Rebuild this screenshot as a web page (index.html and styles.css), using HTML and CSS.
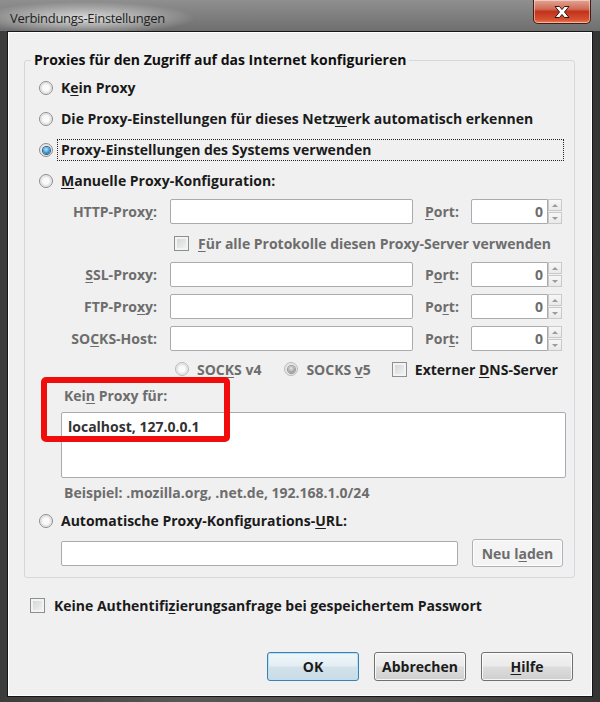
FILE: index.html
```html
<!DOCTYPE html>
<html lang="de">
<head>
    <meta charset="UTF-8">
    <title>Verbindungs-Einstellungen</title>
    <link rel="stylesheet" href="styles.css">
</head>
<body>
    <div class="window">
        <div class="titlebar">
            <span class="title">Verbindungs-Einstellungen</span>
            <span class="close">
                <svg width="20" height="14" viewBox="0 0 20 14">
                    <path d="M3 1.5 L7.5 1.5 L10 4.5 L12.5 1.5 L17 1.5 L12.5 7 L17 12.5 L12.5 12.5 L10 9.5 L7.5 12.5 L3 12.5 L7.5 7 Z" fill="#fff" stroke="#3a1410" stroke-width="1" stroke-linejoin="round"/>
                </svg>
            </span>
        </div>

        <div class="client">
            <fieldset class="group">
                <legend>Proxies für den Zugriff auf das Internet konfigurieren</legend>

                <div class="opt"><span class="radio"></span><span class="lbl">K<u>e</u>in Proxy</span></div>
                <div class="opt"><span class="radio"></span><span class="lbl">Die Proxy-Einstellungen für dieses Netz<u>w</u>erk automatisch erkennen</span></div>
                <div class="opt"><span class="radio on"></span><span class="lbl focus">Proxy-Einstellun<u>g</u>en des Systems verwenden</span></div>
                <div class="opt"><span class="radio"></span><span class="lbl"><u>M</u>anuelle Proxy-Konfiguration:</span></div>

                <div class="manual">
                    <span class="name">HTTP-Prox<u>y</u>:</span>
                    <span class="field"></span>
                    <span class="port-lbl"><u>P</u>ort:</span>
                    <span class="port"><span class="num">0</span><span class="spin"><i class="up"></i><i class="down"></i></span></span>

                    <span class="span-row check-row"><span class="check"></span><span class="dis"><u>F</u>ür alle Protokolle diesen Proxy-Server verwenden</span></span>

                    <span class="name"><u>S</u>SL-Proxy:</span>
                    <span class="field"></span>
                    <span class="port-lbl">P<u>o</u>rt:</span>
                    <span class="port"><span class="num">0</span><span class="spin"><i class="up"></i><i class="down"></i></span></span>

                    <span class="name">FTP-Pro<u>x</u>y:</span>
                    <span class="field"></span>
                    <span class="port-lbl">Po<u>r</u>t:</span>
                    <span class="port"><span class="num">0</span><span class="spin"><i class="up"></i><i class="down"></i></span></span>

                    <span class="name">SO<u>C</u>KS-Host:</span>
                    <span class="field"></span>
                    <span class="port-lbl">Por<u>t</u>:</span>
                    <span class="port"><span class="num">0</span><span class="spin"><i class="up"></i><i class="down"></i></span></span>

                    <span class="span-row socks-row">
                        <span class="radio dim"></span><span class="dis v4">SOC<u>K</u>S v4</span>
                        <span class="radio dim on"></span><span class="dis v5">SOCKS <u>v</u>5</span>
                        <span class="check"></span><span>Externer <u>D</u>NS-Server</span>
                    </span>
                </div>

                <div class="noproxy">
                    <div class="np-label dis">Kei<u>n</u> Proxy für:</div>
                    <div class="textarea">localhost, 127.0.0.1</div>
                    <div class="hint dis">Beispiel: .mozilla.org, .net.de, 192.168.1.0/24</div>
                </div>

                <div class="opt auto"><span class="radio"></span><span class="lbl">Automatische Proxy-Konfigurations-<u>U</u>RL:</span></div>
                <div class="url-row">
                    <span class="field url"></span>
                    <span class="btn dis">Neu l<u>a</u>den</span>
                </div>
            </fieldset>

            <div class="auth"><span class="check"></span><span>Keine Authentifi<u>z</u>ierungsanfrage bei gespeichertem Passwort</span></div>

            <div class="buttons">
                <span class="btn default">OK</span>
                <span class="btn">Abbrechen</span>
                <span class="btn"><u>H</u>ilfe</span>
            </div>
        </div>

        <!-- Markierung aus dem Screenshot -->
        <div class="mark"></div>
    </div>
</body>
</html>
```

FILE: styles.css
```css
* {
    box-sizing: border-box;
}

body {
    margin: 0;
    width: 600px;
    height: 702px;
    overflow: hidden;
    font-family: "Open Sans", "Liberation Sans", sans-serif;
    font-size: 14px;
    font-weight: 700;
    color: #1b1b1b;
}

u {
    text-decoration-thickness: 1px;
    text-underline-offset: 2px;
}

.window {
    position: relative;
    height: 702px;
    padding: 0 7px 5px 7px;
    display: flex;
    flex-direction: column;
    background: linear-gradient(90deg, #3c3c3c, #575757 30%, #4b4b4b 70%, #353535);
}

/* Titelleiste */
.titlebar {
    height: 31px;
    flex: none;
    margin: 0 -7px;
    padding: 0 9px 0 10px;
    display: flex;
    justify-content: space-between;
    align-items: flex-start;
    background:
        radial-gradient(ellipse 110px 16px at 85px 18px, rgba(225, 225, 225, 0.95), rgba(225, 225, 225, 0)),
        linear-gradient(#8f8f8f, #6f6f6f);
}

.title {
    margin-top: 8px;
    font-size: 13px;
    letter-spacing: -0.3px;
    font-weight: 400;
    color: #222;
    line-height: 20px;
}

.close {
    width: 58px;
    height: 24px;
    display: flex;
    align-items: center;
    justify-content: center;
    border: 1px solid #4a1b14;
    border-top: none;
    border-radius: 0 0 5px 5px;
    background: linear-gradient(#e3a594, #cf6a54 40%, #c2321c 50%, #d5512f 85%, #e87e57);
    box-shadow: inset 0 0 0 1px rgba(255, 255, 255, 0.45);
}

/* Inhalt */
.client {
    flex: 1;
    display: flex;
    flex-direction: column;
    background: #f0f0f0;
    border: 1px solid #161616;
    box-shadow: inset 0 0 0 1px #fff;
}

.group {
    margin: 18px 17px 0 16px;
    padding: 7px 10px 10px 14px;
    border: 1px solid #d2d8dd;
    border-radius: 3px;
    min-width: 0;
}

.group legend {
    margin-left: -8px;
    padding: 0 3px;
    line-height: 20px;
    color: #111;
}

.opt {
    height: 22px;
    display: flex;
    align-items: center;
    margin-bottom: 9px;
}

.opt .lbl {
    margin-left: 5px;
    padding: 0 3px;
    line-height: 20px;
}

.opt .focus {
    flex: 1;
    border: 1px dotted #222;
    padding: 0 3px;
    margin-left: 4px;
}

.opt:nth-of-type(4) {
    margin-bottom: 0;
}

.radio {
    flex: none;
    width: 14px;
    height: 14px;
    border: 1px solid #8c8c8c;
    border-radius: 50%;
    background: radial-gradient(circle at 50% 50%, #fafafa 0 3px, #e2e2e2 5px, #f7f7f7 7px);
    display: flex;
    align-items: center;
    justify-content: center;
}

.radio.on::after {
    content: "";
    width: 7px;
    height: 7px;
    border-radius: 50%;
    background: radial-gradient(circle at 45% 35%, #b6ecff, #3d96d1 55%, #174d82);
    box-shadow: 0 0 0 1px #2a5f8e;
}

.radio.dim {
    border-color: #b9b9b9;
}

.radio.dim.on::after {
    background: radial-gradient(circle at 45% 35%, #e6e6e6, #a5a5a5 60%, #808080);
    box-shadow: 0 0 0 1px #9a9a9a;
}

.check {
    flex: none;
    width: 15px;
    height: 15px;
    border: 1px solid #8e8f8f;
    background: linear-gradient(135deg, #cfd1d4, #f6f6f6);
    box-shadow: inset 0 0 0 2px #f3f3f3;
}

.dis {
    color: #6d6d6d;
}

/* Manuelle Konfiguration */
.manual {
    margin: 7px 0 0 22px;
    display: grid;
    grid-template-columns: 97px 243px 34px 91px;
    grid-template-rows: 25px 24px 25px 25px 25px 22px;
    column-gap: 12px;
    row-gap: 7px;
    align-items: center;
}

.manual .name {
    text-align: right;
    padding-right: 1px;
    color: #6d6d6d;
}

.manual .port-lbl {
    color: #6d6d6d;
}

.field {
    height: 25px;
    background: #fff;
    border: 1px solid #a9abb0;
    border-radius: 2px;
}

.port {
    height: 25px;
    display: flex;
}

.port .num {
    flex: 1;
    background: #fff;
    border: 1px solid #a9abb0;
    border-radius: 2px 0 0 2px;
    text-align: right;
    padding-right: 4px;
    line-height: 23px;
    color: #6d6d6d;
}

.spin {
    width: 14px;
    display: flex;
    flex-direction: column;
    gap: 1px;
}

.spin i {
    flex: 1;
    border: 1px solid #c9c9c9;
    background: linear-gradient(#f7f7f7, #e9e9e9);
    display: flex;
    align-items: center;
    justify-content: center;
}

.spin .up::after,
.spin .down::after {
    content: "";
    border-left: 3px solid transparent;
    border-right: 3px solid transparent;
}

.spin .up::after {
    border-bottom: 3px solid #9a9a9a;
}

.spin .down::after {
    border-top: 3px solid #9a9a9a;
}

.span-row {
    grid-column: 2 / 5;
    display: flex;
    align-items: center;
}

.check-row {
    height: 24px;
    padding-left: 4px;
}

.check-row .check {
    margin-right: 9px;
}

.socks-row {
    height: 22px;
    padding-left: 5px;
}

.socks-row .dis,
.socks-row .check + span {
    margin-left: 8px;
}

.socks-row .v4 {
    margin-right: 23px;
}

.socks-row .v5 {
    margin-right: 21px;
}

/* Ausnahmen */
.noproxy {
    margin-left: 22px;
}

.np-label {
    margin: 6px 0 0 3px;
    line-height: 20px;
}

.textarea {
    margin-top: 6px;
    width: 505px;
    height: 66px;
    background: #fff;
    border: 1px solid #a9abb0;
    border-radius: 2px;
    padding: 4px 6px;
    line-height: 20px;
    color: #333;
}

.hint {
    margin: 5px 0 0 3px;
    line-height: 20px;
}

.opt.auto {
    margin: 7px 0 0;
}

.url-row {
    margin: 7px 0 0 22px;
    height: 28px;
    display: flex;
    align-items: center;
    gap: 14px;
}

.url {
    width: 397px;
}

.btn {
    height: 28px;
    width: 91px;
    display: flex;
    align-items: center;
    justify-content: center;
    border: 1px solid #707070;
    border-radius: 3px;
    background: linear-gradient(#f2f2f2, #ebebeb 48%, #dddddd 52%, #cfcfcf);
    box-shadow: inset 0 0 0 1px rgba(255, 255, 255, 0.8);
}

.url-row .btn {
    border-color: #adb2b5;
    background: #f4f4f4;
}

/* untere Zeile */
.auth {
    margin: 16px 0 0 22px;
    height: 22px;
    display: flex;
    align-items: center;
    gap: 9px;
}

.buttons {
    margin: auto 19px 15px 0;
    display: flex;
    justify-content: flex-end;
    gap: 15px;
}

.buttons .btn {
    width: 92px;
    height: 29px;
}

.btn.default {
    border-color: #3c7fb1;
    background: linear-gradient(#eef6fa, #e3eef4 48%, #d3e2ea 52%, #c8dbe5);
    box-shadow: inset 0 0 0 1px #b8e2f6;
}

.mark {
    position: absolute;
    left: 41px;
    top: 377px;
    width: 189px;
    height: 65px;
    border: 6px solid #f20d0d;
    border-radius: 5px;
}
```
